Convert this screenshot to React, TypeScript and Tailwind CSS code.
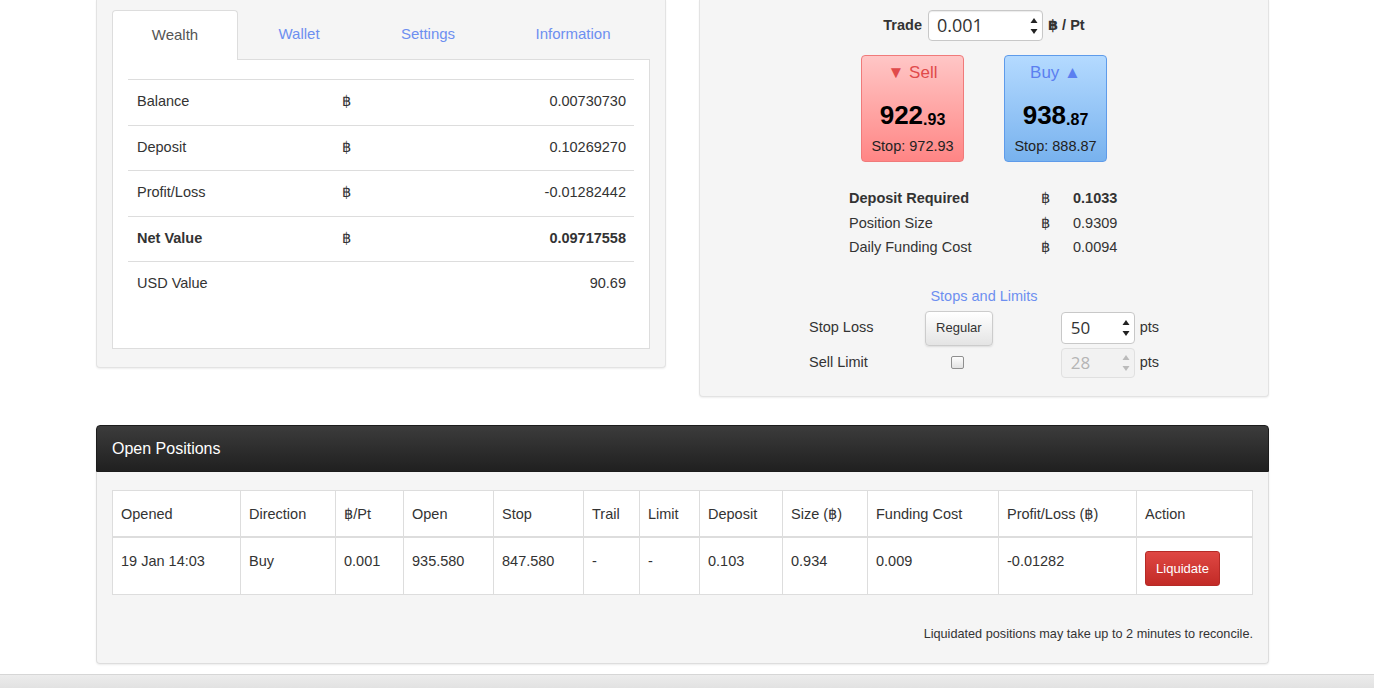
import React from "react";

const FONT = { fontFamily: '"Liberation Sans", Arial, "DejaVu Sans", sans-serif' };

function Spinner({ disabled }: { disabled?: boolean }) {
  const c = disabled ? "#bbb" : "#222";
  return (
    <svg width="8" height="20" viewBox="0 0 8 20" className="shrink-0">
      <polygon points="4,2 7.5,7 0.5,7" fill={c} />
      <polygon points="0.5,13 7.5,13 4,18" fill={c} />
    </svg>
  );
}

function WealthRow({ label, sym, value, bold }: { label: string; sym?: boolean; value: string; bold?: boolean }) {
  return (
    <div className={`flex items-center h-[45.5px] border-t border-[#ddd] text-[14.5px] text-[#333] ${bold ? "font-bold" : ""}`}>
      <div className="w-[206px] pl-[9px]">{label}</div>
      <div className="w-[60px] pl-[8px] font-normal">{sym ? "฿" : ""}</div>
      <div className="flex-1 text-right pr-[8px]">{value}</div>
    </div>
  );
}

function LeftPanel() {
  return (
    <div className="w-[570px] h-[368px] bg-[#f5f5f5] border border-t-0 border-[#e3e3e3] rounded-b-[4px] shadow-[0_1px_2px_rgba(0,0,0,0.07)] px-[15px] pt-[10px]">
      <div className="flex h-[50px] text-[15px]">
        <div className="w-[126px] shrink-0 bg-white border border-b-0 border-[#ddd] rounded-t-[4px] flex items-center justify-center text-[#555]">Wealth</div>
        <div className="w-[122px] shrink-0 border-b border-[#ddd] flex items-center justify-center text-[#6d8ff0]">Wallet</div>
        <div className="w-[136px] shrink-0 border-b border-[#ddd] flex items-center justify-center text-[#6d8ff0]">Settings</div>
        <div className="flex-1 border-b border-[#ddd] flex items-center justify-center text-[#6d8ff0]">Information</div>
      </div>
      <div className="bg-white border border-t-0 border-[#ddd] h-[289px] px-[15px] pt-[19px]">
        <WealthRow label="Balance" sym value="0.00730730" />
        <WealthRow label="Deposit" sym value="0.10269270" />
        <WealthRow label="Profit/Loss" sym value="-0.01282442" />
        <WealthRow label="Net Value" sym value="0.09717558" bold />
        <WealthRow label="USD Value" value="90.69" />
      </div>
    </div>
  );
}

function RightPanel() {
  return (
    <div className="w-[570px] h-[397px] bg-[#f5f5f5] border border-t-0 border-[#e3e3e3] rounded-b-[4px] shadow-[0_1px_2px_rgba(0,0,0,0.07)] flex flex-col items-center text-[#333]">
      <div className="mt-[10px] h-[31px] flex items-center">
        <span className="font-bold text-[14.5px] mr-[6px]">Trade</span>
        <div className="w-[115px] h-[31px] bg-white border border-[#c8c8c8] rounded-[4px] shadow-[inset_0_1px_1px_rgba(0,0,0,0.08)] flex items-center pl-[8px] pr-[4px]">
          <span className="flex-1 text-[18px] text-[#333]" style={{ fontFamily: '"Open Sans", sans-serif' }}>0.001</span>
          <Spinner />
        </div>
        <span className="font-bold text-[14.5px] ml-[5px]">฿ / Pt</span>
      </div>

      <div className="mt-[14px] flex gap-[40px]">
        <div className="w-[103px] h-[107px] rounded-[4px] border border-[#f07a7a] bg-gradient-to-b from-[#ffc6c6] to-[#ff8585] flex flex-col items-center">
          <div className="h-[34px] flex items-center text-[17px] text-[#e04a4a]">▼ Sell</div>
          <div className="h-[45px] flex items-end pb-[7px] font-bold text-black">
            <span className="text-[26px] leading-none">922</span>
            <span className="text-[16px] leading-none">.93</span>
          </div>
          <div className="h-[23px] flex items-center text-[14.5px] text-[#222]">Stop: 972.93</div>
        </div>
        <div className="w-[103px] h-[107px] rounded-[4px] border border-[#5e9bea] bg-gradient-to-b from-[#b4daff] to-[#78b2ee] flex flex-col items-center">
          <div className="h-[34px] flex items-center text-[17px] text-[#5b7ff0]">Buy ▲</div>
          <div className="h-[45px] flex items-end pb-[7px] font-bold text-black">
            <span className="text-[26px] leading-none">938</span>
            <span className="text-[16px] leading-none">.87</span>
          </div>
          <div className="h-[23px] flex items-center text-[14.5px] text-[#222]">Stop: 888.87</div>
        </div>
      </div>

      <div className="mt-[25px] w-[270px] text-[14.5px]">
        <div className="flex items-center h-[24.5px] font-bold">
          <div className="w-[192px]">Deposit Required</div>
          <div className="w-[32px] font-normal">฿</div>
          <div>0.1033</div>
        </div>
        <div className="flex items-center h-[24.5px]">
          <div className="w-[192px]">Position Size</div>
          <div className="w-[32px]">฿</div>
          <div>0.9309</div>
        </div>
        <div className="flex items-center h-[24.5px]">
          <div className="w-[192px]">Daily Funding Cost</div>
          <div className="w-[32px]">฿</div>
          <div>0.0094</div>
        </div>
      </div>

      <div className="mt-[26px] h-[20px] flex items-center text-[14.5px] text-[#6d8ff0]">Stops and Limits</div>

      <div className="mt-[4px] w-[350px] text-[14.5px]">
        <div className="flex items-center h-[35px]">
          <div className="w-[116px]">Stop Loss</div>
          <div className="w-[68px] h-[35px] rounded-[4px] border border-[#ccc] bg-gradient-to-b from-white to-[#e4e4e4] shadow-[0_1px_2px_rgba(0,0,0,0.1)] flex items-center justify-center text-[13px] text-[#333]">Regular</div>
          <div className="w-[68px]" />
          <div className="w-[74px] h-[32px] bg-white border border-[#c8c8c8] rounded-[4px] flex items-center pl-[9px] pr-[4px]">
            <span className="flex-1 text-[17px]" style={{ fontFamily: '"Open Sans", sans-serif' }}>50</span>
            <Spinner />
          </div>
          <span className="ml-[5px]">pts</span>
        </div>
        <div className="flex items-center h-[34px]">
          <div className="w-[116px]">Sell Limit</div>
          <div className="w-[68px] flex justify-center">
            <div className="w-[13px] h-[13px] border border-[#8f8f8f] rounded-[2px] bg-gradient-to-b from-[#fdfdfd] to-[#e2e2e2] -ml-[2px]" />
          </div>
          <div className="w-[68px]" />
          <div className="w-[74px] h-[30px] bg-[#f2f2f2] border border-[#e0e0e0] rounded-[4px] flex items-center pl-[9px] pr-[4px]">
            <span className="flex-1 text-[17px] text-[#b5b5b5]" style={{ fontFamily: '"Open Sans", sans-serif' }}>28</span>
            <Spinner disabled />
          </div>
          <span className="ml-[5px]">pts</span>
        </div>
      </div>
    </div>
  );
}

const COLS: { h: string; v: string; w: number }[] = [
  { h: "Opened", v: "19 Jan 14:03", w: 128 },
  { h: "Direction", v: "Buy", w: 95 },
  { h: "฿/Pt", v: "0.001", w: 68 },
  { h: "Open", v: "935.580", w: 90 },
  { h: "Stop", v: "847.580", w: 90 },
  { h: "Trail", v: "-", w: 56 },
  { h: "Limit", v: "-", w: 60 },
  { h: "Deposit", v: "0.103", w: 83 },
  { h: "Size (฿)", v: "0.934", w: 85 },
  { h: "Funding Cost", v: "0.009", w: 131 },
  { h: "Profit/Loss (฿)", v: "-0.01282", w: 138 },
  { h: "Action", v: "", w: 117 },
];

function PositionsPanel() {
  return (
    <div className="w-[1173px] mt-[28px] rounded-[4px] shadow-[0_1px_2px_rgba(0,0,0,0.08)]">
      <div className="h-[47px] rounded-t-[4px] bg-gradient-to-b from-[#3c3c3c] to-[#202020] border border-[#1c1c1c] flex items-center pl-[15px] text-[16px] text-white">
        Open Positions
      </div>
      <div className="bg-[#f5f5f5] border border-t-0 border-[#ddd] rounded-b-[4px] px-[15px] pt-[18px] h-[192px]">
        <div className="bg-white border border-[#ddd] text-[14.5px] text-[#333]">
          <div className="flex h-[47px] border-b-2 border-[#ddd]">
            {COLS.map((c, i) => (
              <div
                key={c.h}
                className={`pl-[8px] pt-[13px] ${i < COLS.length - 1 ? "border-r border-[#ddd]" : ""} ${i === COLS.length - 1 ? "flex-1" : ""}`}
                style={i === COLS.length - 1 ? undefined : { width: c.w }}
              >
                {c.h}
              </div>
            ))}
          </div>
          <div className="flex h-[56px]">
            {COLS.map((c, i) => (
              <div
                key={c.h}
                className={`pl-[8px] pt-[13px] ${i < COLS.length - 1 ? "border-r border-[#ddd]" : ""} ${i === COLS.length - 1 ? "flex-1 pt-[10px]" : ""}`}
                style={i === COLS.length - 1 ? undefined : { width: c.w }}
              >
                {i === COLS.length - 1 ? (
                  <div className="w-[75px] h-[35px] rounded-[3px] border border-[#b52a26] bg-gradient-to-b from-[#df4743] to-[#c22a26] flex items-center justify-center text-[13px] text-white">
                    Liquidate
                  </div>
                ) : (
                  c.v
                )}
              </div>
            ))}
          </div>
        </div>
        <div className="mt-[30px] text-right text-[12.7px] text-[#333]">Liquidated positions may take up to 2 minutes to reconcile.</div>
      </div>
    </div>
  );
}

export default function App() {
  return (
    <div className="w-[1374px] h-[688px] bg-white overflow-hidden flex flex-col" style={FONT}>
      <div className="pl-[96px] flex flex-col">
        <div className="flex items-start gap-[33px]">
          <LeftPanel />
          <RightPanel />
        </div>
        <PositionsPanel />
      </div>
      <div className="mt-[10px] flex-1 border-t border-[#d6d6d6] bg-gradient-to-b from-[#ececec] to-[#e2e2e2]" />
    </div>
  );
}
